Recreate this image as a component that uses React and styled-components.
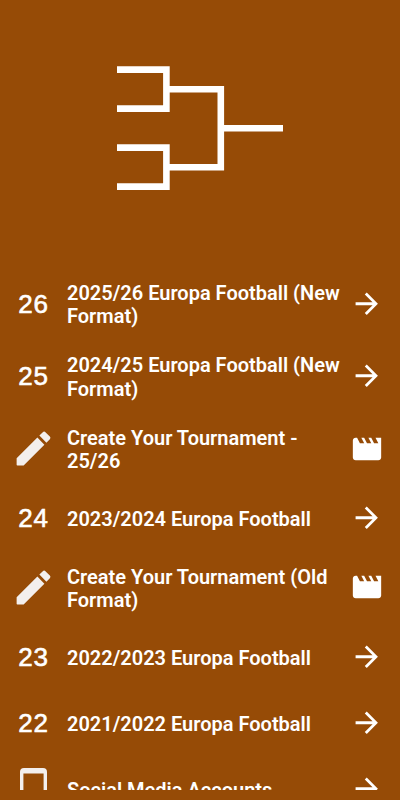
import React from 'react';
import styled, { createGlobalStyle } from 'styled-components';
import { MdArrowForward, MdMovie } from 'react-icons/md';

const ITEMS = [
	{ icon: '26', label: '2025/26 Europa Football (New Format)', tall: true },
	{ icon: '25', label: '2024/25 Europa Football (New Format)', tall: true },
	{ icon: 'edit', label: 'Create Your Tournament - 25/26', tall: true, video: true },
	{ icon: '24', label: '2023/2024 Europa Football' },
	{ icon: 'edit', label: 'Create Your Tournament (Old Format)', tall: true, video: true },
	{ icon: '23', label: '2022/2023 Europa Football' },
	{ icon: '22', label: '2021/2022 Europa Football' },
	{ icon: 'phone', label: 'Social Media Accounts' },
];

const Bracket = () => (
	<svg width="166" height="124" viewBox="117 66 166 124" fill="none" stroke="#fff" strokeWidth="6.6">
		<path d="M117 69.6H166.4V108.6H117" />
		<path d="M117 147.6H166.4V186.6H117" />
		<path d="M169 89.2H220.8V167.2H169" />
		<path d="M224 128.3H283" />
	</svg>
);

const PencilIcon = () => (
	<svg width="45" height="45" viewBox="0 0 24 24" fill="#f3efed">
		<path d="M3 17.25V20.6Q3 21 3.4 21H6.75L17.81 9.94l-3.75-3.75L3 17.25zM20.71 7.04c.39-.39.39-1.02 0-1.41l-2.34-2.34c-.39-.39-1.02-.39-1.41 0l-1.83 1.83 3.75 3.75 1.83-1.83z" />
	</svg>
);

const PhoneIcon = () => (
	<svg width="45" height="45" viewBox="0 0 45 45" fill="#f3efed">
		<path
			fillRule="evenodd"
			d="M13 2H32Q36 2 36 6V39.5Q36 43.5 32 43.5H13Q9 43.5 9 39.5V6Q9 2 13 2ZM12.4 7.6V37.8H32.6V7.6Z"
		/>
	</svg>
);

const LeadingIcon = ({ icon }) => {
	if (icon === 'edit') return <PencilIcon />;
	if (icon === 'phone') return <PhoneIcon />;
	return <Season>{icon}</Season>;
};

const App = () => {
	return (
		<>
			<GlobalStyle />
			<Screen>
				<Header>
					<Bracket />
				</Header>
				<Menu>
					{ITEMS.map(({ icon, label, tall, video }) => (
						<MenuItem key={label} $tall={tall}>
							<Leading>
								<LeadingIcon icon={icon} />
							</Leading>
							<Label>{label}</Label>
							<Trailing>{video ? <MdMovie size={34} /> : <MdArrowForward size={33.5} />}</Trailing>
						</MenuItem>
					))}
				</Menu>
			</Screen>
		</>
	);
};

const GlobalStyle = createGlobalStyle`
	body {
		margin: 0;
		background-color: #964b06;
	}
`;

const Screen = styled.main`
	display: flex;
	flex-direction: column;
	width: 400px;
	height: 790px;
	overflow: hidden;
	color: #fff;
	font-family: Roboto, sans-serif;
`;

const Header = styled.header`
	display: flex;
	flex: none;
	justify-content: center;
	box-sizing: border-box;
	height: 267.3px;
	padding-top: 66px;
`;

const Menu = styled.nav`
	display: flex;
	flex-direction: column;
`;

const MenuItem = styled.a`
	display: flex;
	flex: none;
	align-items: center;
	box-sizing: border-box;
	height: ${props => (props.$tall ? '72.5px' : '66.2px')};
	padding: 0 16px 0 11px;
`;

const Leading = styled.span`
	display: flex;
	flex: none;
	justify-content: center;
	align-items: center;
	width: 45px;
	margin-right: 11px;
`;

const Season = styled.span`
	font-family: 'Liberation Sans', Arial, sans-serif;
	font-size: 26px;
	line-height: 30px;
	letter-spacing: 0.8px;
	-webkit-text-stroke: 0.6px #fff;
`;

const Label = styled.span`
	flex: 1;
	padding-top: 3.6px;
	font-size: 20px;
	font-weight: 600;
	line-height: 23.4px;
`;

const Trailing = styled.span`
	display: flex;
	flex: none;
	justify-content: center;
	width: 34px;
`;

export default App;
